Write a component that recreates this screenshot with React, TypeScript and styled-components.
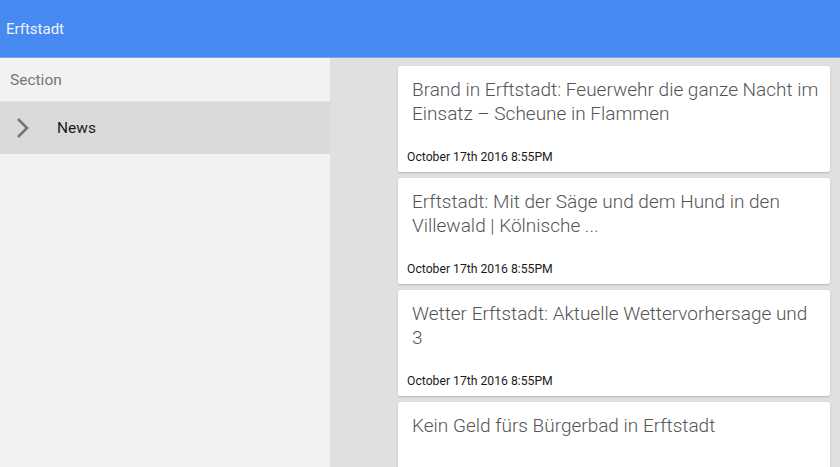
import styled, { createGlobalStyle } from "styled-components";

const GlobalStyle = createGlobalStyle`
    html, body {
        margin: 0;
        padding: 0;
        height: 100%;
        overflow: hidden;
    }
    body {
        font-family: Roboto, "Liberation Sans", sans-serif;
    }
    #root {
        height: 100%;
    }
`;

const Page = styled.div`
    display: flex;
    flex-direction: column;
    height: 467px;
    width: 840px;
`;

const Header = styled.header`
    height: 57px;
    flex-shrink: 0;
    background: #4689f0;
    display: flex;
    align-items: center;
    padding-left: 6px;
    color: #f0f4fc;
    font-size: 15px;
    box-shadow: 0 1px 0 #7aa9f0;
    position: relative;
    z-index: 1;
`;

const Body = styled.div`
    flex: 1;
    display: flex;
    min-height: 0;
    margin-top: 1px;
`;

const Sidebar = styled.nav`
    width: 330px;
    flex-shrink: 0;
    background: #f2f2f2;
`;

const SectionLabel = styled.div`
    height: 43px;
    display: flex;
    align-items: center;
    padding-left: 10px;
    font-size: 15.5px;
    color: #777;
    border-bottom: 1px solid #e4e4e4;
`;

const NavItem = styled.div<{ $active?: boolean }>`
    height: 52px;
    display: flex;
    align-items: center;
    background: ${(p) => (p.$active ? "#dadada" : "transparent")};
    font-size: 15.5px;
    color: #1a1a1a;
`;

const ChevronBox = styled.span`
    width: 57px;
    display: flex;
    padding-left: 15px;
    box-sizing: border-box;
`;

const Main = styled.main`
    flex: 1;
    background: #e0e0e0;
    padding: 8px 10px 0 68px;
    display: flex;
    flex-direction: column;
    gap: 6px;
    overflow: hidden;
`;

const Card = styled.article`
    height: 106px;
    flex-shrink: 0;
    background: white;
    border-radius: 2px;
    box-shadow: 0 1px 2px rgba(0, 0, 0, 0.18);
    box-sizing: border-box;
    padding: 12px 9px 7px;
    display: flex;
    flex-direction: column;
    justify-content: space-between;
`;

const Title = styled.h3`
    margin: 0;
    padding-left: 5px;
    font-family: "Roboto Light", Roboto, "Liberation Sans", sans-serif;
    font-size: 19px;
    line-height: 24px;
    font-weight: 300;
    color: #555;
`;

const Date = styled.div`
    font-size: 12.2px;
    line-height: 16px;
    color: #1a1a1a;
`;

const news = [
    "Brand in Erftstadt: Feuerwehr die ganze Nacht im Einsatz – Scheune in Flammen",
    "Erftstadt: Mit der Säge und dem Hund in den Villewald | Kölnische ...",
    "Wetter Erftstadt: Aktuelle Wettervorhersage und 3",
    "Kein Geld fürs Bürgerbad in Erftstadt",
];

function Chevron() {
    return (
        <svg width="16" height="22" viewBox="0 0 16 22">
            <path d="M3 2 L12 11 L3 20" fill="none" stroke="#777" strokeWidth="2.6" />
        </svg>
    );
}

export default function App() {
    return (
        <Page>
            <GlobalStyle />
            <Header>Erftstadt</Header>
            <Body>
                <Sidebar>
                    <SectionLabel>Section</SectionLabel>
                    <NavItem $active>
                        <ChevronBox>
                            <Chevron />
                        </ChevronBox>
                        News
                    </NavItem>
                </Sidebar>
                <Main>
                    {news.map((title) => (
                        <Card key={title}>
                            <Title>{title}</Title>
                            <Date>October 17th 2016 8:55PM</Date>
                        </Card>
                    ))}
                </Main>
            </Body>
        </Page>
    );
}
